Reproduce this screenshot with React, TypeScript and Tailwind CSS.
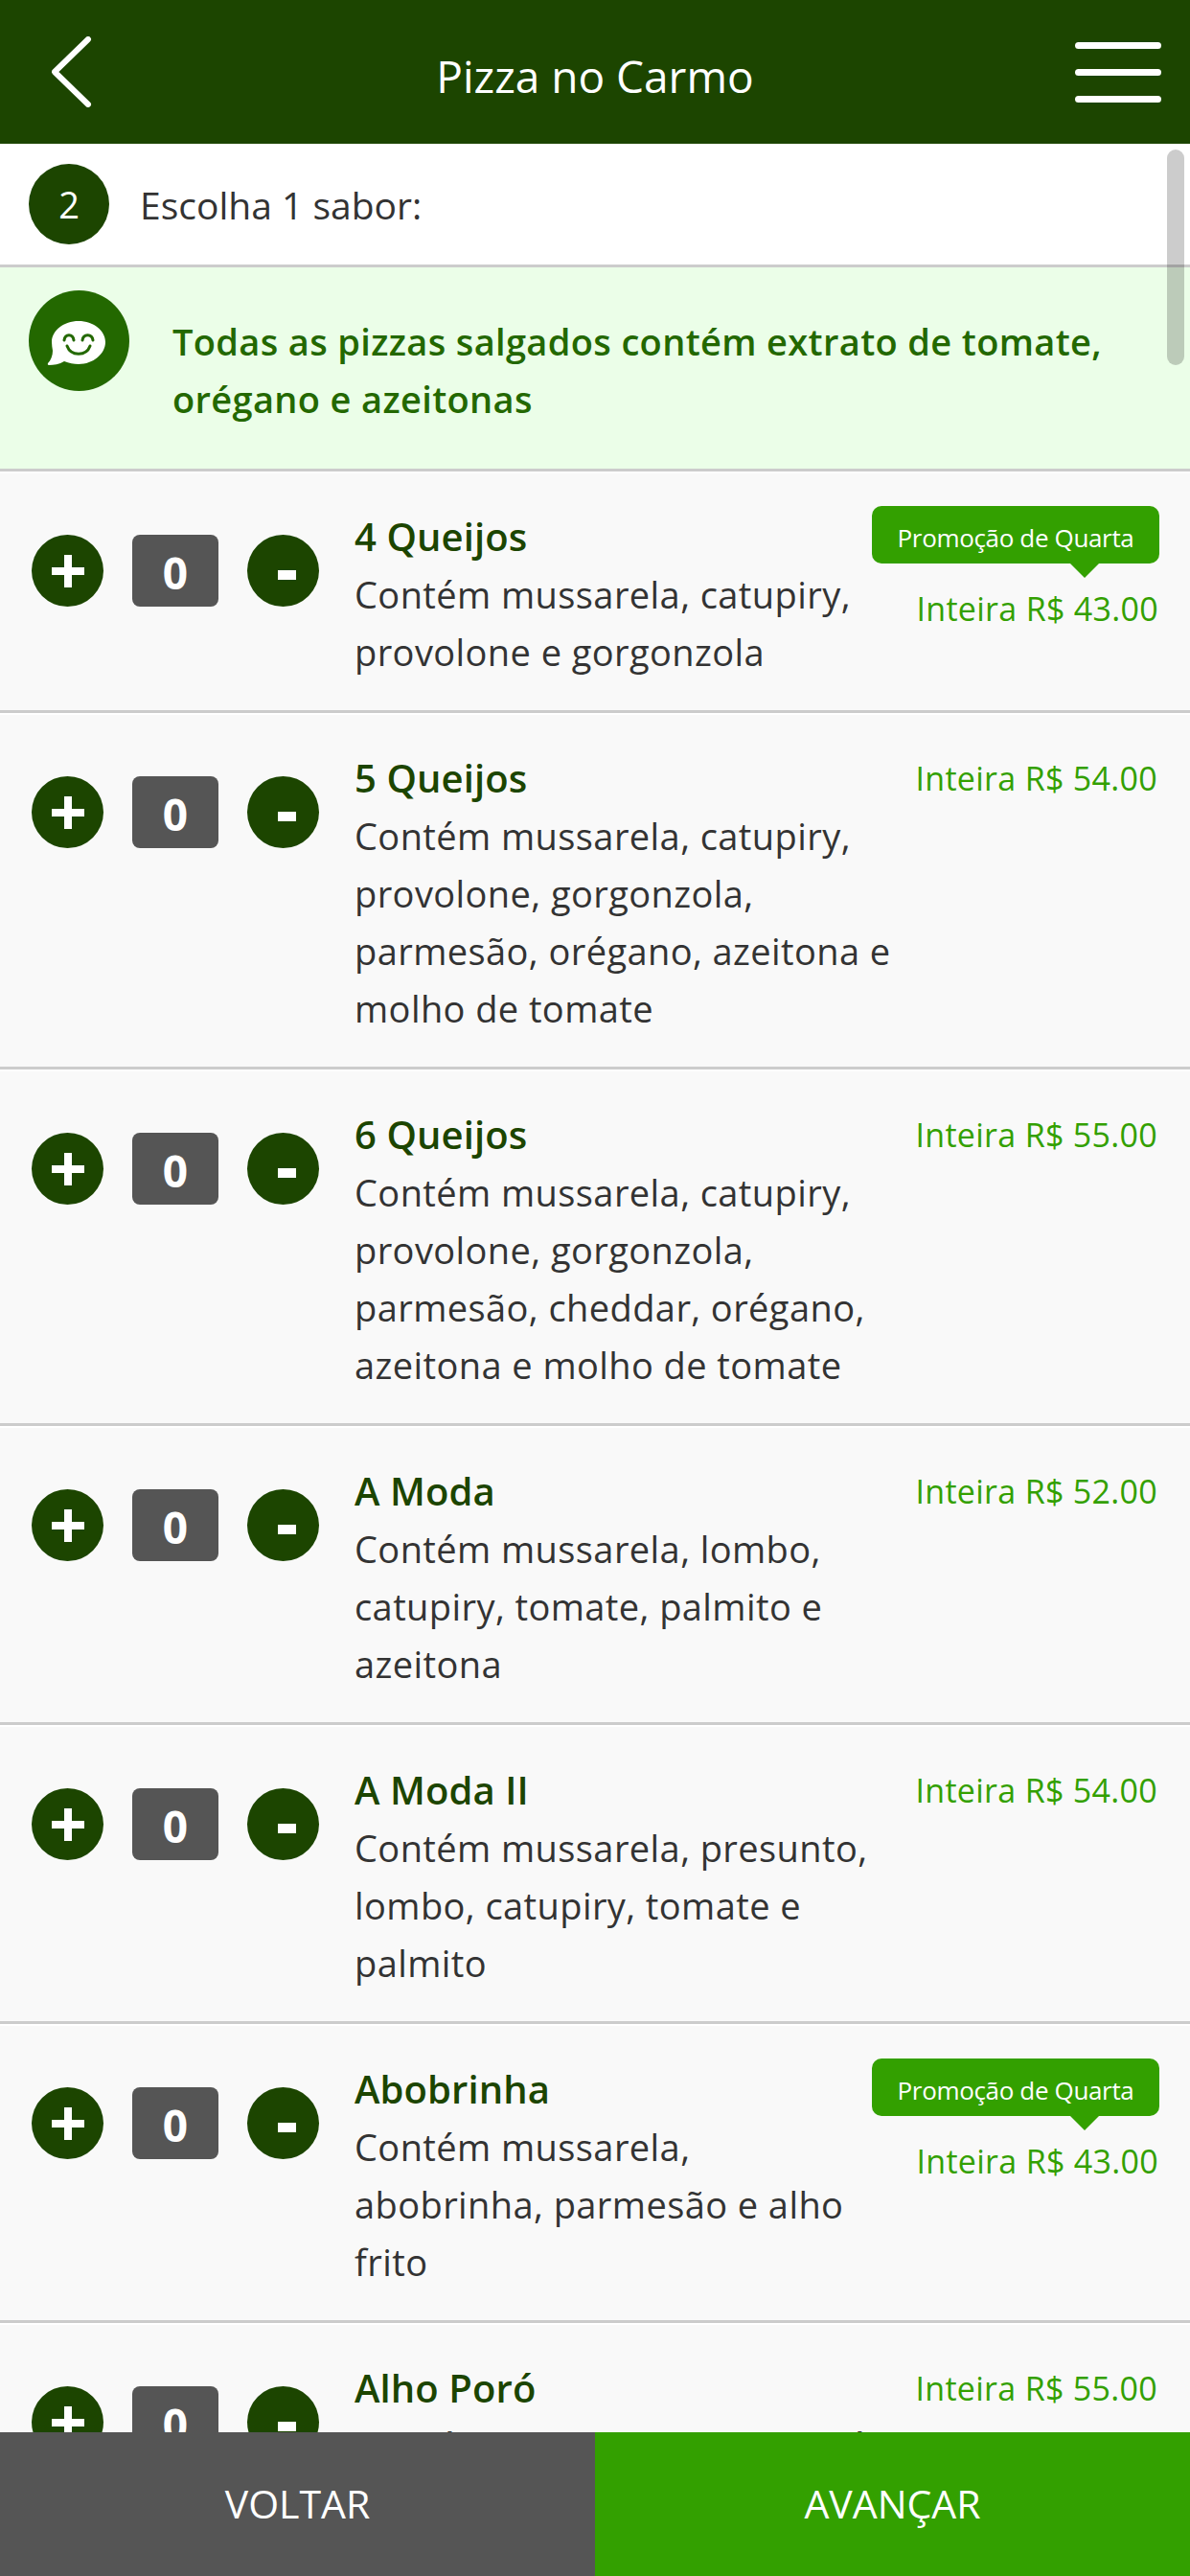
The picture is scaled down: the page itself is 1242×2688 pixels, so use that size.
const font = { fontFamily: '"Open Sans", sans-serif' }

const pizzas = [
  { name: '4 Queijos', desc: ['Contém mussarela, catupiry,', 'provolone e gorgonzola'], price: '43.00', promo: true },
  { name: '5 Queijos', desc: ['Contém mussarela, catupiry,', 'provolone, gorgonzola,', 'parmesão, orégano, azeitona e', 'molho de tomate'], price: '54.00' },
  { name: '6 Queijos', desc: ['Contém mussarela, catupiry,', 'provolone, gorgonzola,', 'parmesão, cheddar, orégano,', 'azeitona e molho de tomate'], price: '55.00' },
  { name: 'A Moda', desc: ['Contém mussarela, lombo,', 'catupiry, tomate, palmito e', 'azeitona'], price: '52.00' },
  { name: 'A Moda II', desc: ['Contém mussarela, presunto,', 'lombo, catupiry, tomate e', 'palmito'], price: '54.00' },
  { name: 'Abobrinha', desc: ['Contém mussarela,', 'abobrinha, parmesão e alho', 'frito'], price: '43.00', promo: true },
  { name: 'Alho Poró', desc: ['Contém mussarela, alho poró,', 'parmesão e azeitona'], price: '55.00' },
]

function PizzaRow({ name, desc, price, promo }: { name: string; desc: string[]; price: string; promo?: boolean }) {
  return (
    <div className="flex border-t-[2px] border-t-white border-b-[3px] border-b-[#cccccc] bg-[#f9f9f9] pt-[36px] pb-[31px]">
      <div className="flex items-start gap-[30px] pl-[33px] pt-[28px] w-[370px] shrink-0">
        <div className="w-[75px] h-[75px] rounded-full bg-[#1c4500] flex items-center justify-center shrink-0">
          <svg width="34" height="34" viewBox="0 0 34 34"><path d="M13 0h8v13h13v8H21v13h-8V21H0v-8h13z" fill="#fff" /></svg>
        </div>
        <div className="w-[90px] h-[75px] rounded-[8px] bg-[#555555] flex items-center justify-center text-white font-bold text-[46px] leading-none pt-[3px] shrink-0">0</div>
        <div className="w-[75px] h-[75px] rounded-full bg-[#1c4500] flex items-center justify-center shrink-0">
          <span className="w-[19px] h-[10px] bg-white mt-[8px] ml-[8px]" />
        </div>
      </div>
      <div className="w-[540px] shrink-0">
        <div className="text-[#1c4500] font-semibold text-[40px] leading-[60px] tracking-[0.1px]">{name}</div>
        {desc.map((line) => (
          <div key={line} className="text-[#333333] text-[38px] leading-[60px] tracking-[0.42px] whitespace-nowrap">{line}</div>
        ))}
      </div>
      <div className="flex-1 flex flex-col items-end pr-[34px]">
        {promo && (
          <div className="relative -mt-[2px] mb-[17px] mr-[-1px] w-[300px] h-[60px] shrink-0 rounded-[10px] bg-[#33a000] flex items-center justify-center pt-[6px] text-white text-[26px] tracking-[-0.35px]">
            Promoção de Quarta
            <span className="absolute top-full right-[63px] w-0 h-0 border-x-[15px] border-x-transparent border-t-[15px] border-t-[#33a000]" />
          </div>
        )}
        <div className="text-[#33a000] text-[34px] leading-[60px] font-medium tracking-[0.3px] whitespace-nowrap">Inteira R$ {price}</div>
      </div>
    </div>
  )
}

export default function App() {
  return (
    <div className="relative flex flex-col w-[1242px] h-[2688px] overflow-hidden bg-white" style={font}>
      <header className="flex items-center h-[150px] shrink-0 bg-[#1c4500] pl-[54px] pr-[30px]">
        <div className="w-[66px] shrink-0">
          <svg width="44" height="74" viewBox="0 0 44 74" fill="none" stroke="#fff" strokeWidth="6" strokeLinecap="round" strokeLinejoin="round" className="block">
            <path d="M38 3 3 37l35 34" />
          </svg>
        </div>
        <div className="flex-1 text-center text-white text-[46px] pt-[8px]">Pizza no Carmo</div>
        <div className="flex flex-col gap-[21px] w-[90px]">
          <span className="h-[7px] rounded-full bg-white" />
          <span className="h-[7px] rounded-full bg-white" />
          <span className="h-[7px] rounded-full bg-white" />
        </div>
      </header>

      <main className="flex-1 min-h-0 overflow-hidden">
        <div className="flex items-center gap-[32px] h-[129px] border-b-[3px] border-[#cccccc] pl-[30px]">
          <div className="w-[84px] h-[84px] rounded-full bg-[#1c4500] flex items-center justify-center text-white font-medium text-[38px]">2</div>
          <div className="text-[#333333] text-[39px] pt-[2px]">Escolha 1 sabor:</div>
        </div>
        <div className="flex items-start h-[213px] bg-[#ebfee8] border-b-[3px] border-[#cccccc] pl-[30px] pt-[24px]">
          <svg width="105" height="105" viewBox="0 0 105 105" className="shrink-0">
            <circle cx="52.5" cy="52.5" r="52.5" fill="#236800" />
            <path d="M24 54c0-12 12.500-22 28-22s28 10 28 22-12.500 23-28 23c-5 0-10-1-15-3-5 3-11 4-16 4-1 0-1.500-1-1-2 3-3 5-8 5-13-.5-3-1-6-1-9z" fill="#fff" />
            <path d="M37 52c1-7 9-7 10 0M56 52c1-7 10-7 11 0" fill="none" stroke="#236800" strokeWidth="3" strokeLinecap="round" />
            <path d="M40 58c4 11 20 11 24 0" fill="none" stroke="#236800" strokeWidth="3" strokeLinecap="round" />
          </svg>
          <div className="ml-[45px] pt-[23px] text-[#236800] text-[38px] leading-[60px] font-semibold tracking-[0.35px]">
            <div className="whitespace-nowrap">Todas as pizzas salgados contém extrato de tomate,</div>
            <div>orégano e azeitonas</div>
          </div>
        </div>
        {pizzas.map((p) => (
          <PizzaRow key={p.name} {...p} />
        ))}
      </main>

      <footer className="flex h-[150px] shrink-0 text-white text-[41px] font-medium">
        <div className="flex-1 bg-[#555555] flex items-center justify-center">VOLTAR</div>
        <div className="flex-1 bg-[#33a000] flex items-center justify-center">AVANÇAR</div>
      </footer>

      <div className="absolute top-[156px] right-[6px] w-[18px] h-[225px] rounded-full bg-black/20" />
    </div>
  )
}
